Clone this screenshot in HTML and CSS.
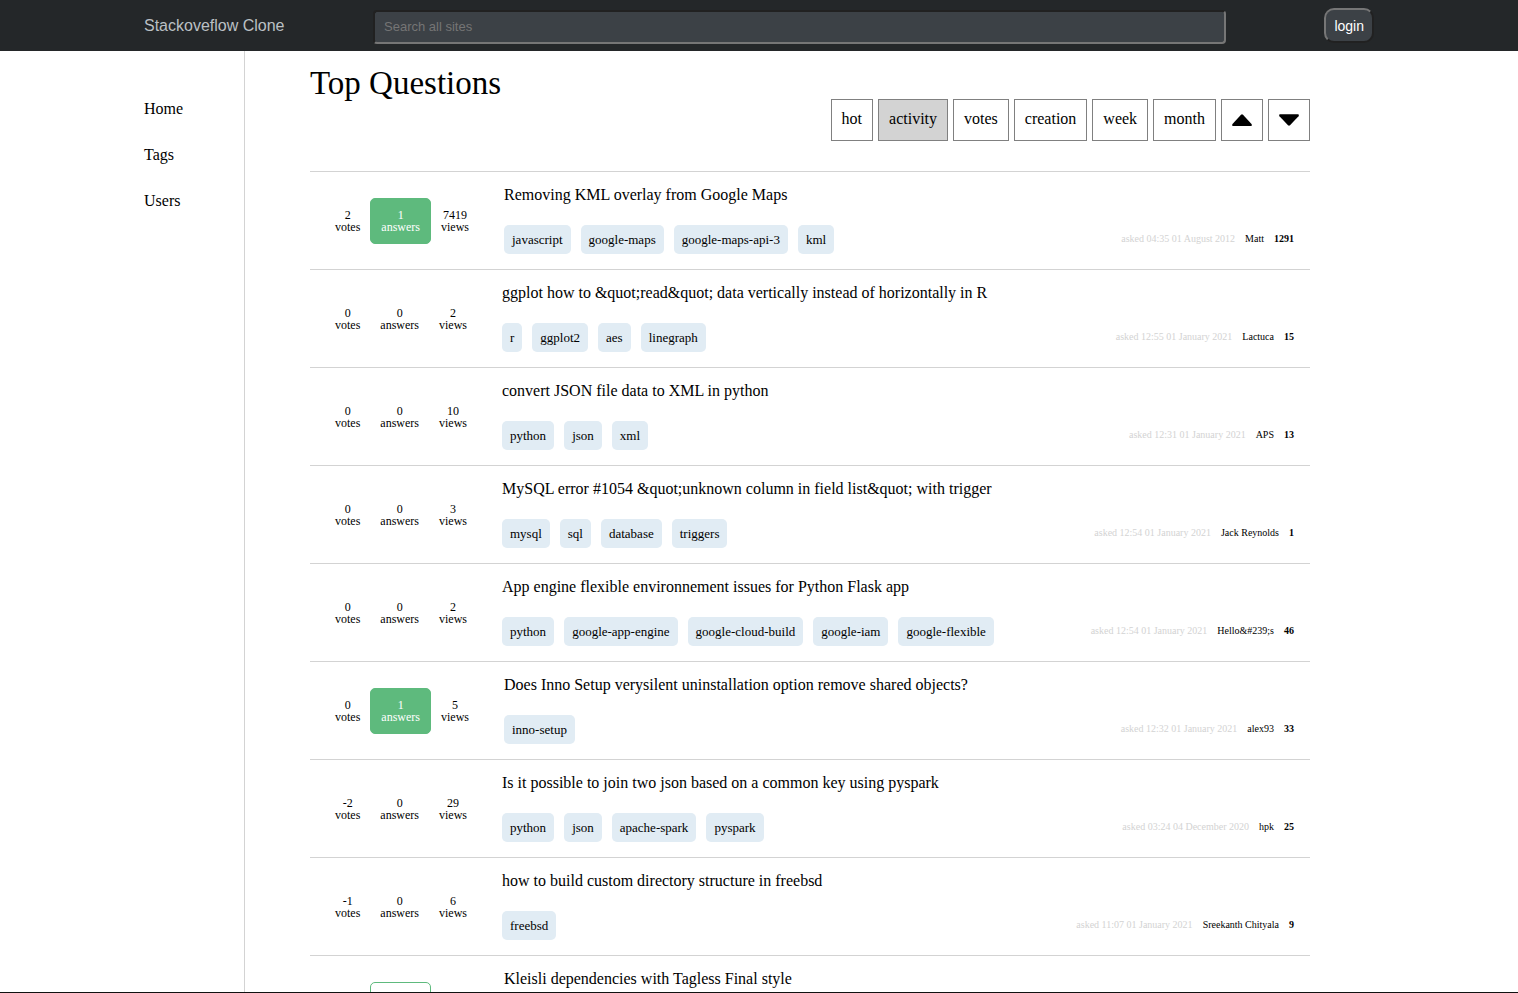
FILE: index.html
```html
<!DOCTYPE html>
<html lang="en">
<head>
<meta charset="utf-8">
<meta name="viewport" content="width=device-width, initial-scale=1">
<title>Stackoveflow Clone</title>
<link rel="stylesheet" href="styles.css">
</head>
<body>
<header class="topbar">
  <div class="topbar-inner">
    <a class="brand" href="#">Stackoveflow Clone</a>
    <input class="search" type="search" placeholder="Search all sites" aria-label="Search all sites">
    <button class="login" type="button">login</button>
  </div>
</header>
<div class="page">
  <nav class="sidebar">
    <a href="#">Home</a>
    <a href="#">Tags</a>
    <a href="#">Users</a>
  </nav>
  <main class="main">
    <h1 class="heading">Top Questions</h1>
    <div class="sorts">
      <button class="sort" type="button">hot</button>
      <button class="sort sort-active" type="button">activity</button>
      <button class="sort" type="button">votes</button>
      <button class="sort" type="button">creation</button>
      <button class="sort" type="button">week</button>
      <button class="sort" type="button">month</button>
      <button class="sort" type="button" aria-label="Ascending"><svg class="arrow" viewBox="0 0 20 20"><path d="M9 4.700Q10 3.900 11 4.700L19.500 14Q20.600 16 18.800 16H1.200Q-.600 16 .500 14Z"/></svg></button>
      <button class="sort" type="button" aria-label="Descending"><svg class="arrow" viewBox="0 0 20 20"><path d="M9 15.300Q10 16.100 11 15.300L19.500 6.200Q20.600 4.200 18.800 4.200H1.200Q-.600 4.200 .500 6.200Z"/></svg></button>
    </div>
    <div class="questions">
      <article class="question">
        <div class="stats"><div class="stat">2<br>votes</div><div class="stat accepted">1<br>answers</div><div class="stat">7419<br>views</div></div>
        <div class="body"><a class="title" href="#">Removing KML overlay from Google Maps</a>
          <div class="details"><div class="tags"><a href="#">javascript</a><a href="#">google-maps</a><a href="#">google-maps-api-3</a><a href="#">kml</a></div>
          <div class="meta"><span class="asked">asked 04:35 01 August 2012</span><span>Matt</span><b>1291</b></div></div></div>
      </article>
      <article class="question">
        <div class="stats"><div class="stat">0<br>votes</div><div class="stat">0<br>answers</div><div class="stat">2<br>views</div></div>
        <div class="body"><a class="title" href="#">ggplot how to &amp;quot;read&amp;quot; data vertically instead of horizontally in R</a>
          <div class="details"><div class="tags"><a href="#">r</a><a href="#">ggplot2</a><a href="#">aes</a><a href="#">linegraph</a></div>
          <div class="meta"><span class="asked">asked 12:55 01 January 2021</span><span>Lactuca</span><b>15</b></div></div></div>
      </article>
      <article class="question">
        <div class="stats"><div class="stat">0<br>votes</div><div class="stat">0<br>answers</div><div class="stat">10<br>views</div></div>
        <div class="body"><a class="title" href="#">convert JSON file data to XML in python</a>
          <div class="details"><div class="tags"><a href="#">python</a><a href="#">json</a><a href="#">xml</a></div>
          <div class="meta"><span class="asked">asked 12:31 01 January 2021</span><span>APS</span><b>13</b></div></div></div>
      </article>
      <article class="question">
        <div class="stats"><div class="stat">0<br>votes</div><div class="stat">0<br>answers</div><div class="stat">3<br>views</div></div>
        <div class="body"><a class="title" href="#">MySQL error #1054 &amp;quot;unknown column in field list&amp;quot; with trigger</a>
          <div class="details"><div class="tags"><a href="#">mysql</a><a href="#">sql</a><a href="#">database</a><a href="#">triggers</a></div>
          <div class="meta"><span class="asked">asked 12:54 01 January 2021</span><span>Jack Reynolds</span><b>1</b></div></div></div>
      </article>
      <article class="question">
        <div class="stats"><div class="stat">0<br>votes</div><div class="stat">0<br>answers</div><div class="stat">2<br>views</div></div>
        <div class="body"><a class="title" href="#">App engine flexible environnement issues for Python Flask app</a>
          <div class="details"><div class="tags"><a href="#">python</a><a href="#">google-app-engine</a><a href="#">google-cloud-build</a><a href="#">google-iam</a><a href="#">google-flexible</a></div>
          <div class="meta"><span class="asked">asked 12:54 01 January 2021</span><span>Hello&amp;#239;s</span><b>46</b></div></div></div>
      </article>
      <article class="question">
        <div class="stats"><div class="stat">0<br>votes</div><div class="stat accepted">1<br>answers</div><div class="stat">5<br>views</div></div>
        <div class="body"><a class="title" href="#">Does Inno Setup verysilent uninstallation option remove shared objects?</a>
          <div class="details"><div class="tags"><a href="#">inno-setup</a></div>
          <div class="meta"><span class="asked">asked 12:32 01 January 2021</span><span>alex93</span><b>33</b></div></div></div>
      </article>
      <article class="question">
        <div class="stats"><div class="stat">-2<br>votes</div><div class="stat">0<br>answers</div><div class="stat">29<br>views</div></div>
        <div class="body"><a class="title" href="#">Is it possible to join two json based on a common key using pyspark</a>
          <div class="details"><div class="tags"><a href="#">python</a><a href="#">json</a><a href="#">apache-spark</a><a href="#">pyspark</a></div>
          <div class="meta"><span class="asked">asked 03:24 04 December 2020</span><span>hpk</span><b>25</b></div></div></div>
      </article>
      <article class="question">
        <div class="stats"><div class="stat">-1<br>votes</div><div class="stat">0<br>answers</div><div class="stat">6<br>views</div></div>
        <div class="body"><a class="title" href="#">how to build custom directory structure in freebsd</a>
          <div class="details"><div class="tags"><a href="#">freebsd</a></div>
          <div class="meta"><span class="asked">asked 11:07 01 January 2021</span><span>Sreekanth Chityala</span><b>9</b></div></div></div>
      </article>
      <article class="question">
        <div class="stats"><div class="stat">0<br>votes</div><div class="stat answered">1<br>answers</div><div class="stat">5<br>views</div></div>
        <div class="body"><a class="title" href="#">Kleisli dependencies with Tagless Final style</a>
          <div class="details"><div class="tags"></div></div></div>
      </article>
    </div>
  </main>
</div>
</body>
</html>
```
FILE: styles.css
```css
* { box-sizing: border-box; }

body {
  margin: 0;
  height: 100vh;
  display: flex;
  flex-direction: column;
  overflow: hidden;
  border-bottom: 1px solid #111;
  background: #fff;
  color: #000;
  font: 16px/18px "Liberation Serif", "Times New Roman", serif;
}

a { color: inherit; text-decoration: none; }

.topbar {
  flex: none;
  background: #242729;
  font-family: "Liberation Sans", Arial, sans-serif;
}

.topbar-inner,
.page {
  width: 100%;
  max-width: 1278px;
  margin: 0 auto;
  padding: 0 24px;
}

.topbar-inner {
  display: flex;
  align-items: center;
  height: 51px;
}

.brand { flex: none; width: 229px; color: #bbc0c4; }

.search {
  flex: 1;
  min-width: 0;
  height: 34px;
  padding: 0 9px;
  margin: 2px 0 0;
  border: 2px inset #767676;
  border-radius: 4px;
  background: #3c4146;
  color: #fff;
  font: 13px "Liberation Sans", Arial, sans-serif;
  appearance: none;
}

.search::placeholder { color: #757575; }

.login {
  flex: none;
  height: 35px;
  margin-left: 98px;
  padding: 0 8px;
  border: 2px outset #767676;
  border-radius: 10px;
  background: #3c4146;
  color: #fff;
  font: 14px "Liberation Sans", Arial, sans-serif;
}

.page { flex: 1; min-height: 0; display: flex; }

.sidebar {
  flex: none;
  width: 101px;
  display: flex;
  flex-direction: column;
  gap: 28px;
  padding-top: 49px;
  border-right: 1px solid #d3d3d3;
}

.main { flex: 1; min-width: 0; padding: 14px 64px 0 65px; }

.heading { margin: 0; padding-top: 2px; font-size: 33px; font-weight: 400; line-height: 32px; }

.sorts { display: flex; justify-content: flex-end; gap: 5px; margin-bottom: 30px; }

.sort {
  display: flex;
  align-items: flex-start;
  height: 42px;
  padding: 10px;
  border: 1px solid #808080;
  background: #fff;
  color: #000;
  font: inherit;
}

.sort-active { background: #d3d3d3; }

.arrow { width: 20px; height: 20px; }

.question { display: flex; border-top: 1px solid #d3d3d3; }

.stats {
  flex: none;
  display: flex;
  align-items: center;
  padding: 0 25px 0 15px;
  font-size: 12px;
  line-height: 12px;
  text-align: center;
}

.stat { padding: 10px; }

.accepted,
.answered { border: 1px solid #5eba7d; border-radius: 5px; }

.accepted { background: #5eba7d; color: #fff; }

.body { flex: 1; min-width: 0; padding: 14px 16px 15px 0; }

.title { display: block; margin-bottom: 21px; }

.details { display: flex; justify-content: space-between; align-items: center; min-height: 29px; }

.tags { display: flex; gap: 10px; font-size: 13px; line-height: 15px; }

.tags a { padding: 7px 8px; border-radius: 5px; background: #e1ecf4; }

.meta { display: flex; gap: 10px; padding-bottom: 2px; font-size: 10px; line-height: 12px; white-space: nowrap; }

.asked { color: #d3d3d3; }
```
